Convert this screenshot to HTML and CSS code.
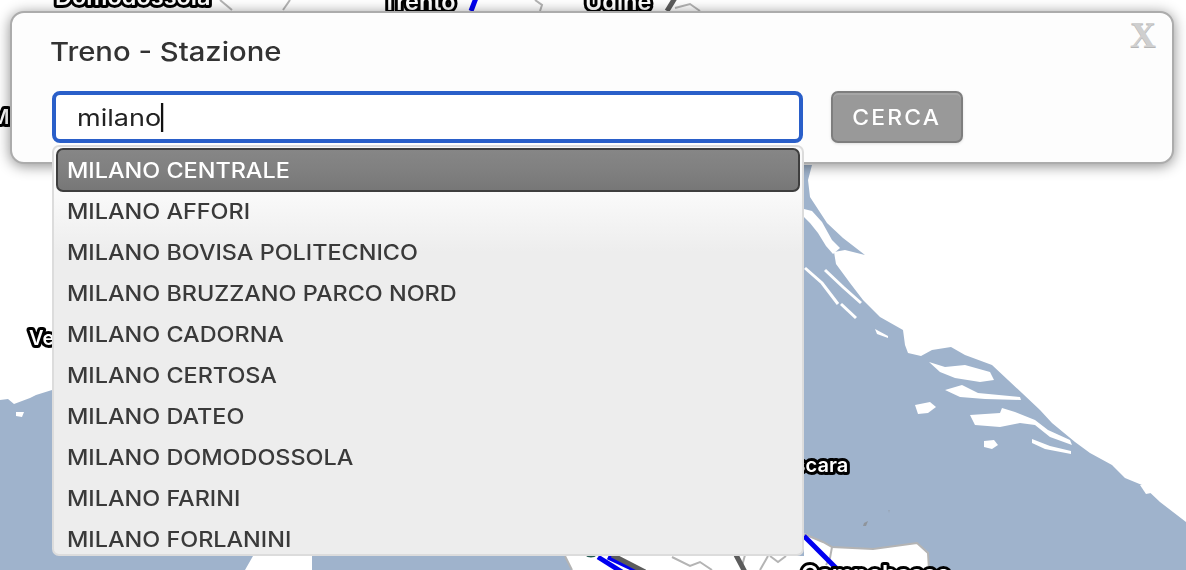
FILE: index.html
```html
<!DOCTYPE html>
<html lang="it">
<head>
<meta charset="utf-8">
<title>Treno - Stazione</title>
<link rel="stylesheet" href="styles.css">
</head>
<body>
<main class="stage">
  <svg class="map" viewBox="0 0 1186 570" width="1186" height="570" aria-hidden="true">
    <path class="sea" d="M0 400 L8 399 L14 404 L22 401 L30 398 L36 395 L52 390 L60 165 L812 165 L808 180 L810 197 L827 223 L843 238 L865 255 L845 250 L834 252 L836 264 L850 283 L863 300 L880 317 L903 330 L905 345 L908 353 L921 356 L932 350 L951 347 L965 355 L992 365 L1008 380 L1022 393 L1040 410 L1052 423 L1075 442 L1090 453 L1112 465 L1125 478 L1142 485 L1160 502 L1186 522 L1186 570 L928 570 L929 553 L917 543 L873 549 L832 547 L823 542 L804 533 L804 556 L565 556 L572 570 L312 570 L312 556 L253 556 L245 570 L0 570 Z"/>
    <g class="island">
      <path d="M804 209 L812 211 L822 222 L832 240 L840 248 L833 254 L826 246 L818 233 L810 223 L804 217 Z"/>
      <path d="M875 329 L888 336 L888 338 L877 334 Z"/>
      <path d="M929 362 L945 367 L965 365 L990 372 L994 380 L980 382 L955 378 L940 372 Z"/>
      <path d="M945 390 L962 385 L978 393 L1020 397 L1021 400 L985 399 L960 397 Z"/>
      <path d="M915 405 L930 402 L936 407 L928 413 L918 414 Z"/>
      <path d="M970 415 L1000 413 L1002 408 L1015 412 L1035 420 L1048 430 L1070 440 L1072 445 L1050 437 L1035 425 L1020 423 L1000 427 L975 425 Z"/>
      <path d="M984 441 L994 440 L998 445 L992 449 L984 447 Z"/>
      <path d="M1032 439 L1050 446 L1071 451 L1071 454 L1045 449 L1032 443 Z"/>
      <path d="M1140 485 L1152 484 L1156 492 L1146 494 Z"/>
      <path d="M16 412 L24 412 L22 417 L16 416 Z"/>
    </g>
    <g class="strip">
      <path d="M805 268 L822 283 L838 304"/>
      <path d="M841 304 L856 318"/>
      <path d="M825 270 L843 287 L861 303"/>
    </g>
    <path class="rock" d="M864 523 L868 521 L866 526 L863 526 Z"/>
    <path class="rock faint" d="M888 510 L890 510 L889 513 Z"/>
    <g class="border">
      <path d="M804 534 L823 542 L832 547 L873 549 L917 543 L928 553 L929 570"/>
      <path d="M832 547 L830 558 L826 565"/>
      <path d="M565 556 L572 570"/>
      <path d="M672 557 L690 566 L700 562 L712 570"/>
      <path d="M745 555 L742 566"/>
      <path d="M770 556 L778 562 L786 556"/>
      <path d="M760 570 L768 556"/>
      <path d="M220 0 L232 10"/>
      <path d="M290 0 L283 10"/>
      <path d="M535 0 L542 5 L540 11"/>
      <path d="M675 8 L690 4 L700 11"/>
    </g>
    <path class="rail blue" d="M804 536 L838 570"/>
    <path class="rail blue" d="M476 -2 L471 11"/>
    <path class="rail blue" d="M598 557 L622 572"/>
    <path class="rail blue" d="M608 557 L640 572"/>
    <path class="rail grey" d="M612 555 L645 572"/>
    <path class="rail grey" d="M736 555 L745 572"/>
    <path class="rail grey" d="M675 -2 L667 11"/>
    <circle class="stop" cx="591" cy="548" r="8"/>
    <circle class="stop" cx="185" cy="-2" r="8"/>
    <text class="place big" x="55" y="5">Domodossola</text>
    <text class="place big" x="382" y="10">Trento</text>
    <text class="place big" x="585" y="10">Udine</text>
    <text class="place" x="-9" y="124">Milano</text>
    <text class="place" x="29" y="345">Verona</text>
    <text class="place" x="770" y="472">Pescara</text>
    <text class="place big" x="801" y="582">Campobasso</text>
  </svg>

  <section class="dialog">
    <span class="close">X</span>
    <h1 class="title"><span class="wide">Treno - Stazione</span></h1>
    <div class="search">
      <div class="field"><span class="typed">milano<span class="caret"></span></span></div>
      <button class="go" type="button"><span class="wide mid">CERCA</span></button>
    </div>
  </section>

  <ul class="results">
    <li class="result active"><span class="wide">MILANO CENTRALE</span></li>
    <li class="result"><span class="wide">MILANO AFFORI</span></li>
    <li class="result"><span class="wide">MILANO BOVISA POLITECNICO</span></li>
    <li class="result"><span class="wide">MILANO BRUZZANO PARCO NORD</span></li>
    <li class="result"><span class="wide">MILANO CADORNA</span></li>
    <li class="result"><span class="wide">MILANO CERTOSA</span></li>
    <li class="result"><span class="wide">MILANO DATEO</span></li>
    <li class="result"><span class="wide">MILANO DOMODOSSOLA</span></li>
    <li class="result"><span class="wide">MILANO FARINI</span></li>
    <li class="result"><span class="wide">MILANO FORLANINI</span></li>
  </ul>
</main>
</body>
</html>
```
FILE: styles.css
```css
* { box-sizing: border-box; }
html, body { margin: 0; background: #fff; }
body { font-family: Inter, "Liberation Sans", sans-serif; }

.stage { position: relative; width: 1186px; height: 570px; overflow: hidden; background: #fff; }

/* Montserrat is not installed: Inter stretched to its wide proportions */
.wide { display: inline-block; transform: scaleX(1.125); transform-origin: left center; white-space: nowrap; }
.wide.mid { transform: scaleX(1.09); transform-origin: center; }

.map { position: absolute; left: 0; top: 0; display: block; filter: blur(.5px); }
.sea { fill: #9fb3cc; }
.island { fill: #fff; }
.strip { fill: none; stroke: #fff; stroke-width: 3; }
.rock { fill: #8f959c; }
.rock.faint { opacity: .4; }
.border { fill: none; stroke: #b4b4b4; stroke-width: 2; }
.rail { fill: none; stroke-width: 5; }
.rail.blue { stroke: #0000f0; }
.rail.grey { stroke: #5c5c5c; }
.stop { fill: none; stroke: #1f5a50; stroke-width: 3; }
.place {
  font-family: Inter, "Liberation Sans", sans-serif;
  font-size: 20px;
  font-weight: 600;
  fill: #fff;
  stroke: #000;
  stroke-width: 6px;
  stroke-linejoin: round;
  paint-order: stroke;
}
.place.big { font-size: 23.5px; }

.dialog {
  position: absolute;
  left: 10px;
  top: 11px;
  width: 1164px;
  height: 153px;
  padding: 21px 39px 0 40px;
  background: #fdfdfd;
  border: 2px solid #acacac;
  border-radius: 14px;
  box-shadow: 0 2px 14px rgba(0, 0, 0, .45);
}
.title {
  margin: 0 0 21px -2px;
  height: 36px;
  font-size: 26px;
  line-height: 36px;
  font-weight: 500;
  color: #333;
}
.close {
  position: absolute;
  right: 16px;
  top: 5px;
  font-family: "Liberation Serif", serif;
  font-size: 36px;
  line-height: 34px;
  font-weight: 700;
  color: #cfcfcf;
  text-shadow: 0 1px 0 #b5b5b5;
}
.search { display: flex; gap: 28px; align-items: stretch; height: 52px; }
.field {
  display: flex;
  align-items: center;
  width: 751px;
  padding-left: 21px;
  background: #fff;
  border: 4px solid #2a5fc9;
  border-radius: 8px;
  font-size: 23.5px;
  color: #222;
}
.typed { display: inline-flex; align-items: center; transform: scaleX(1.15); transform-origin: left center; }
.caret { display: inline-block; width: 1.5px; height: 29px; background: #111; }
.go {
  width: 132px;
  padding: 0;
  background: #999;
  border: 2px solid #7e7e7e;
  border-radius: 7px;
  box-shadow: inset 0 2px 0 #a6a6a6, 0 1px 3px rgba(0, 0, 0, .12);
  font-family: inherit;
  font-size: 21px;
  font-weight: 500;
  letter-spacing: 2px;
  color: #fff;
}

.results {
  position: absolute;
  left: 52px;
  top: 145px;
  width: 752px;
  height: 411px;
  margin: 0;
  padding: 1px 2px 0;
  list-style: none;
  overflow: hidden;
  background: linear-gradient(#fafafa 0, #fafafa 45px, #ededed 105px, #ededed 100%);
  border: 2px solid #dcdcdc;
  border-radius: 7px;
  font-size: 20.8px;
  font-weight: 500;
  color: #3a3a3a;
}
.result {
  display: flex;
  align-items: center;
  height: 41px;
  padding-left: 11px;
}
.active {
  height: 44px;
  margin-bottom: -1.5px;
  padding-left: 9px;
  background: linear-gradient(#868686, #808080 50%, #777);
  border: 2px solid #3e3e3e;
  border-radius: 7px;
  color: #fff;
}
```
